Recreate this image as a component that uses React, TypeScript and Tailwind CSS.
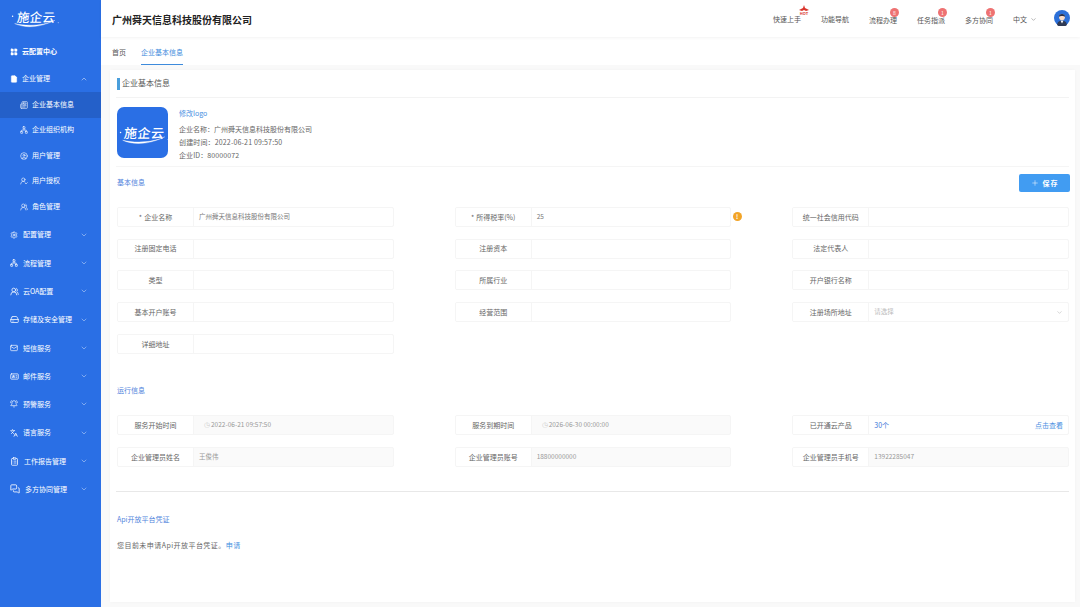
import React from "react";
import {
  LayoutGrid, FileText, ChevronUp, ChevronDown, Network, CircleUser, UserRoundCheck, UsersRound,
  Settings, HardDrive, Mail, IdCard, BellRing, Languages, ClipboardList, MessagesSquare, Newspaper, Plus,
} from "lucide-react";

const font = "font-['Noto_Sans_CJK_SC','Noto_Sans',sans-serif]";

function Logo({ small }: { small?: boolean }) {
  return (
    <div className={`relative flex items-center justify-center ${small ? "translate-x-[2px]" : ""}`}>
      <span className={`font-medium text-white leading-none -skew-x-6 ${small ? "text-[13px] tracking-[0.5px]" : "text-[12.5px] tracking-[0.2px]"}`}>施企云</span>
      <svg className={`absolute ${small ? "left-[-6px] top-[-2px] w-[54px] h-[24px]" : "left-[-7px] top-[-3px] w-[52px] h-[23px]"}`} viewBox="0 0 62 28" fill="none">
        <circle cx="2.5" cy="10" r="0.9" fill="white" />
        <circle cx="58" cy="18" r="0.6" fill="white" />
        <path d="M5 19 C 18 25, 36 24, 54 15 C 42 21, 22 23, 5 19 Z" fill="white" stroke="white" strokeWidth="0.4" />
      </svg>
    </div>
  );
}

type Item = { label: string; Icon: React.ElementType; h: string; chev?: "up" | "down"; bold?: boolean };

const topItems: Item[] = [
  { label: "云配置中心", Icon: LayoutGrid, h: "h-[27px]", bold: true },
  { label: "企业管理", Icon: FileText, h: "h-[27px]", chev: "up" },
];
const subItems: { label: string; Icon: React.ElementType; active?: boolean }[] = [
  { label: "企业基本信息", Icon: Newspaper, active: true },
  { label: "企业组织机构", Icon: Network },
  { label: "用户管理", Icon: CircleUser },
  { label: "用户授权", Icon: UserRoundCheck },
  { label: "角色管理", Icon: UsersRound },
];
const lowerItems: { label: string; Icon: React.ElementType; size: string }[] = [
  { label: "配置管理", Icon: Settings, size: "w-[8px] h-[8px] mr-[5px]" },
  { label: "流程管理", Icon: Network, size: "w-[8px] h-[8px] mr-[5px]" },
  { label: "云OA配置", Icon: UsersRound, size: "w-[9px] h-[9px] mr-[4px]" },
  { label: "存储及安全管理", Icon: HardDrive, size: "w-[9px] h-[9px] mr-[4px]" },
  { label: "短信服务", Icon: Mail, size: "w-[8px] h-[8px] mr-[5px]" },
  { label: "邮件服务", Icon: IdCard, size: "w-[9px] h-[9px] mr-[4px]" },
  { label: "预警服务", Icon: BellRing, size: "w-[8px] h-[8px] mr-[5px]" },
  { label: "语言服务", Icon: Languages, size: "w-[8px] h-[8px] mr-[5px]" },
  { label: "工作报告管理", Icon: ClipboardList, size: "w-[9px] h-[9px] mr-[5px]" },
  { label: "多方协同管理", Icon: MessagesSquare, size: "w-[10px] h-[10px] mr-[5px]" },
];

function Sidebar() {
  return (
    <aside className="w-[101px] shrink-0 h-full bg-[#2a6fe5] text-white flex flex-col">
      <div className="h-[38px] pl-[17px] pt-[11px] flex items-start">
        <Logo />
      </div>
      {topItems.map((it) => (
        <div key={it.label} className={`${it.h} flex items-center pl-[10px] pr-[13px] text-[7px] ${it.bold ? "font-bold" : ""}`}>
          <it.Icon className="w-[8px] h-[8px] mr-[4px] shrink-0" fill="white" strokeWidth={1.5} />
          <span className="flex-1">{it.label}</span>
          {it.chev && <ChevronUp className="w-[8px] h-[8px] opacity-70" />}
        </div>
      ))}
      {subItems.map((it) => (
        <div key={it.label} className={`h-[25.5px] shrink-0 flex items-center pl-[20px] text-[7px] ${it.active ? "bg-[#2460c9]" : ""}`}>
          <it.Icon className="w-[8px] h-[8px] mr-[4px] shrink-0" strokeWidth={1.8} />
          <span className="-translate-y-[1px]">{it.label}</span>
        </div>
      ))}
      <div className="h-[1px]" />
      {lowerItems.map((it) => (
        <div key={it.label} className="h-[28.3px] shrink-0 flex items-center pl-[10px] pr-[13px] text-[7px] whitespace-nowrap">
          <it.Icon className={`${it.size} shrink-0`} strokeWidth={2} />
          <span className="flex-1">{it.label}</span>
          <ChevronDown className="w-[8px] h-[8px] opacity-60 shrink-0" />
        </div>
      ))}
    </aside>
  );
}

function Badge({ n }: { n: string }) {
  return (
    <span className="absolute -top-[7px] right-[-2px] w-[9px] h-[9px] rounded-full bg-[#ee7272] text-white text-[5px] leading-[9px] text-center">{n}</span>
  );
}

function Header() {
  return (
    <header className="h-[37px] shrink-0 bg-white flex items-center pl-[11px] pr-[10px] shadow-[0_1px_3px_rgba(0,0,0,0.05)] relative">
      <h1 className="text-[10px] font-bold text-[#222] flex-1 translate-y-[1px]">广州舜天信息科技股份有限公司</h1>
      <div className="flex items-center text-[7px] text-[#555] pt-[2px]">
        <span className="relative w-[48px]">快速上手
          <svg className="absolute -top-[9px] left-[24px]" width="14" height="10" viewBox="0 0 14 10">
            <path d="M7 0 L8 3 L12 5 L9 6 L7 5 L5 6 L2 5 L6 3Z" fill="#d9342b" />
            <text x="7" y="9.5" textAnchor="middle" fontSize="4" fontWeight="700" fill="#d9342b">HOT</text>
          </svg>
        </span>
        <span className="w-[48px]">功能导航</span>
        <span className="relative w-[48px]"><span className="relative inline-block translate-y-[1px]">流程办理<Badge n="8" /></span></span>
        <span className="relative w-[48px]"><span className="relative inline-block translate-y-[1px]">任务指派<Badge n="1" /></span></span>
        <span className="relative w-[48px]"><span className="relative inline-block translate-y-[1px]">多方协同<Badge n="1" /></span></span>
        <span className="flex items-center w-[41px]">中文<ChevronDown className="w-[7px] h-[7px] ml-[3px] text-[#888]" /></span>
        <svg className="-translate-y-[2px]" width="16" height="16" viewBox="0 0 16 16">
          <circle cx="8" cy="8" r="8" fill="#2b6fd8" />
          <path d="M3 15 C3.5 11.5 6 10.5 8 10.5 C10 10.5 12.5 11.5 13 15 A8 8 0 0 1 3 15Z" fill="#2f3a55" />
          <path d="M6.5 10.5 L8 13.5 L9.5 10.5Z" fill="#fff" />
          <circle cx="8" cy="7.2" r="2.9" fill="#f8dcc8" />
          <path d="M5 6.8 C4.6 3.2 11.4 3.2 11 6.8 C10 5.6 6 5.6 5 6.8Z" fill="#28304a" />
        </svg>
      </div>
    </header>
  );
}

function Field({ label, value, star, muted, children, valueClass }: { label: string; value?: string; star?: boolean; muted?: boolean; children?: React.ReactNode; valueClass?: string }) {
  return (
    <div className={`h-[20px] flex rounded-[2px] border border-[#f5f5f5] overflow-hidden ${muted ? "bg-[#fafafa]" : "bg-white"}`}>
      <div className="w-[76px] shrink-0 bg-white border-r border-[#f5f5f5] flex items-center justify-center text-[7px] text-[#666]">
        {star && <span className="mr-[2px]">*</span>}{label}
      </div>
      <div className={`flex-1 flex items-center px-[5px] text-[6.5px] text-[#777] ${valueClass ?? ""}`}>
        {children ?? value}
      </div>
    </div>
  );
}

function SectionTitle({ children, className }: { children: React.ReactNode; className?: string }) {
  return <div className={`text-[7px] leading-[10px] text-[#4f83dc] ${className ?? ""}`}>{children}</div>;
}

export default function App() {
  return (
    <div className={`${font} w-[1080px] h-[607px] flex overflow-hidden bg-white`}>
      <Sidebar />
      <main className="flex-1 min-w-0 flex flex-col bg-[#f9f9f9]">
        <Header />
        <nav className="h-[28px] shrink-0 flex items-start pl-[11px] text-[7px] text-[#555] bg-white">
          <span className="pt-[10px] w-[29px]">首页</span>
          <span className="pt-[10px] pb-[6px] text-[#3d8bdc] border-b border-[#3d8bdc]">企业基本信息</span>
        </nav>
        <section className="mt-[5px] ml-[9px] mr-[5px] h-[532px] shrink-0 bg-white px-[6px] shadow-[0_0_3px_rgba(0,0,0,0.03)]">
          <div className="h-[28px] flex items-center border-b border-[#f3f3f3]">
            <span className="w-[2.5px] h-[12px] bg-[#4a9fdc] ml-[1px] mr-[2.5px]" />
            <span className="text-[8px] text-[#555] -translate-y-[1px]">企业基本信息</span>
          </div>
          <div className="h-[69px] flex items-start border-b border-[#f5f5f5] pt-[9px] pl-[1px]">
            <div className="w-[51px] h-[51px] rounded-[7px] bg-[#2a6fe5] flex items-center justify-center">
              <Logo small />
            </div>
            <div className="ml-[11px] text-[7px] text-[#666] leading-[13px]">
              <div className="text-[#4a90e2] mb-[3px]">修改logo</div>
              <div>企业名称：广州舜天信息科技股份有限公司</div>
              <div className="tracking-[0.15px]">创建时间：2022-06-21 09:57:50</div>
              <div className="tracking-[0.1px]">企业ID：80000072</div>
            </div>
          </div>
          <div className="flex items-start justify-between pt-[7px] pl-[1px]">
            <SectionTitle className="pt-[3px]">基本信息</SectionTitle>
            <button className="w-[51px] h-[18px] rounded-[2px] bg-[#419cf2] text-white text-[7px] font-bold flex items-center justify-center tracking-[1px] mr-[-1px]">
              <Plus className="w-[8px] h-[8px] mr-[4px]" strokeWidth={1.5} />保存
            </button>
          </div>
          <div className="grid grid-cols-3 gap-x-[61px] gap-y-[11.7px] mt-[15px] pl-[1px]">
            <Field label="企业名称" star value="广州舜天信息科技股份有限公司" />
            <div className="relative">
              <Field label="所得税率(%)" star value="25" />
              <span className="absolute left-[278px] top-[5px] w-[9px] h-[9px] rounded-full bg-[#f2a427] text-white text-[6px] leading-[9px] text-center font-bold">!</span>
            </div>
            <Field label="统一社会信用代码" />
            <Field label="注册固定电话" />
            <Field label="注册资本" />
            <Field label="法定代表人" />
            <Field label="类型" />
            <Field label="所属行业" />
            <Field label="开户银行名称" />
            <Field label="基本开户账号" />
            <Field label="经营范围" />
            <Field label="注册场所地址">
              <span className="flex-1 text-[#bbb]">请选择</span>
              <ChevronDown className="w-[7px] h-[7px] text-[#bbb]" />
            </Field>
            <Field label="详细地址" />
          </div>
          <SectionTitle className="mt-[31px] pl-[1px]">运行信息</SectionTitle>
          <div className="grid grid-cols-3 gap-x-[61px] gap-y-[12px] mt-[20px] pl-[1px]">
            <Field label="服务开始时间" muted valueClass="text-[#999]"><span className="text-[#ccc] mr-[1px] pl-[5px]">◷</span>2022-06-21 09:57:50</Field>
            <Field label="服务到期时间" muted valueClass="text-[#999]"><span className="text-[#ccc] mr-[1px] pl-[5px]">◷</span>2026-06-30 00:00:00</Field>
            <Field label="已开通云产品">
              <span className="flex-1 text-[#3d78d8] text-[7px]">30个</span>
              <span className="text-[#4a90e2] text-[7px]">点击查看</span>
            </Field>
            <Field label="企业管理员姓名" muted value="王俊伟" valueClass="text-[#999]" />
            <Field label="企业管理员账号" muted value="18800000000" valueClass="text-[#999]" />
            <Field label="企业管理员手机号" muted value="13922285047" valueClass="text-[#999]" />
          </div>
          <div className="mt-[24px] border-t border-[#e8e8e8]" />
          <SectionTitle className="mt-[22px] pl-[1px]">Api开放平台凭证</SectionTitle>
          <div className="mt-[16px] pl-[1px] text-[7px] leading-[10px] text-[#666] tracking-[0.45px]">
            您目前未申请Api开放平台凭证。<span className="text-[#3f8fe0]">申请</span>
          </div>
        </section>
      </main>
    </div>
  );
}
